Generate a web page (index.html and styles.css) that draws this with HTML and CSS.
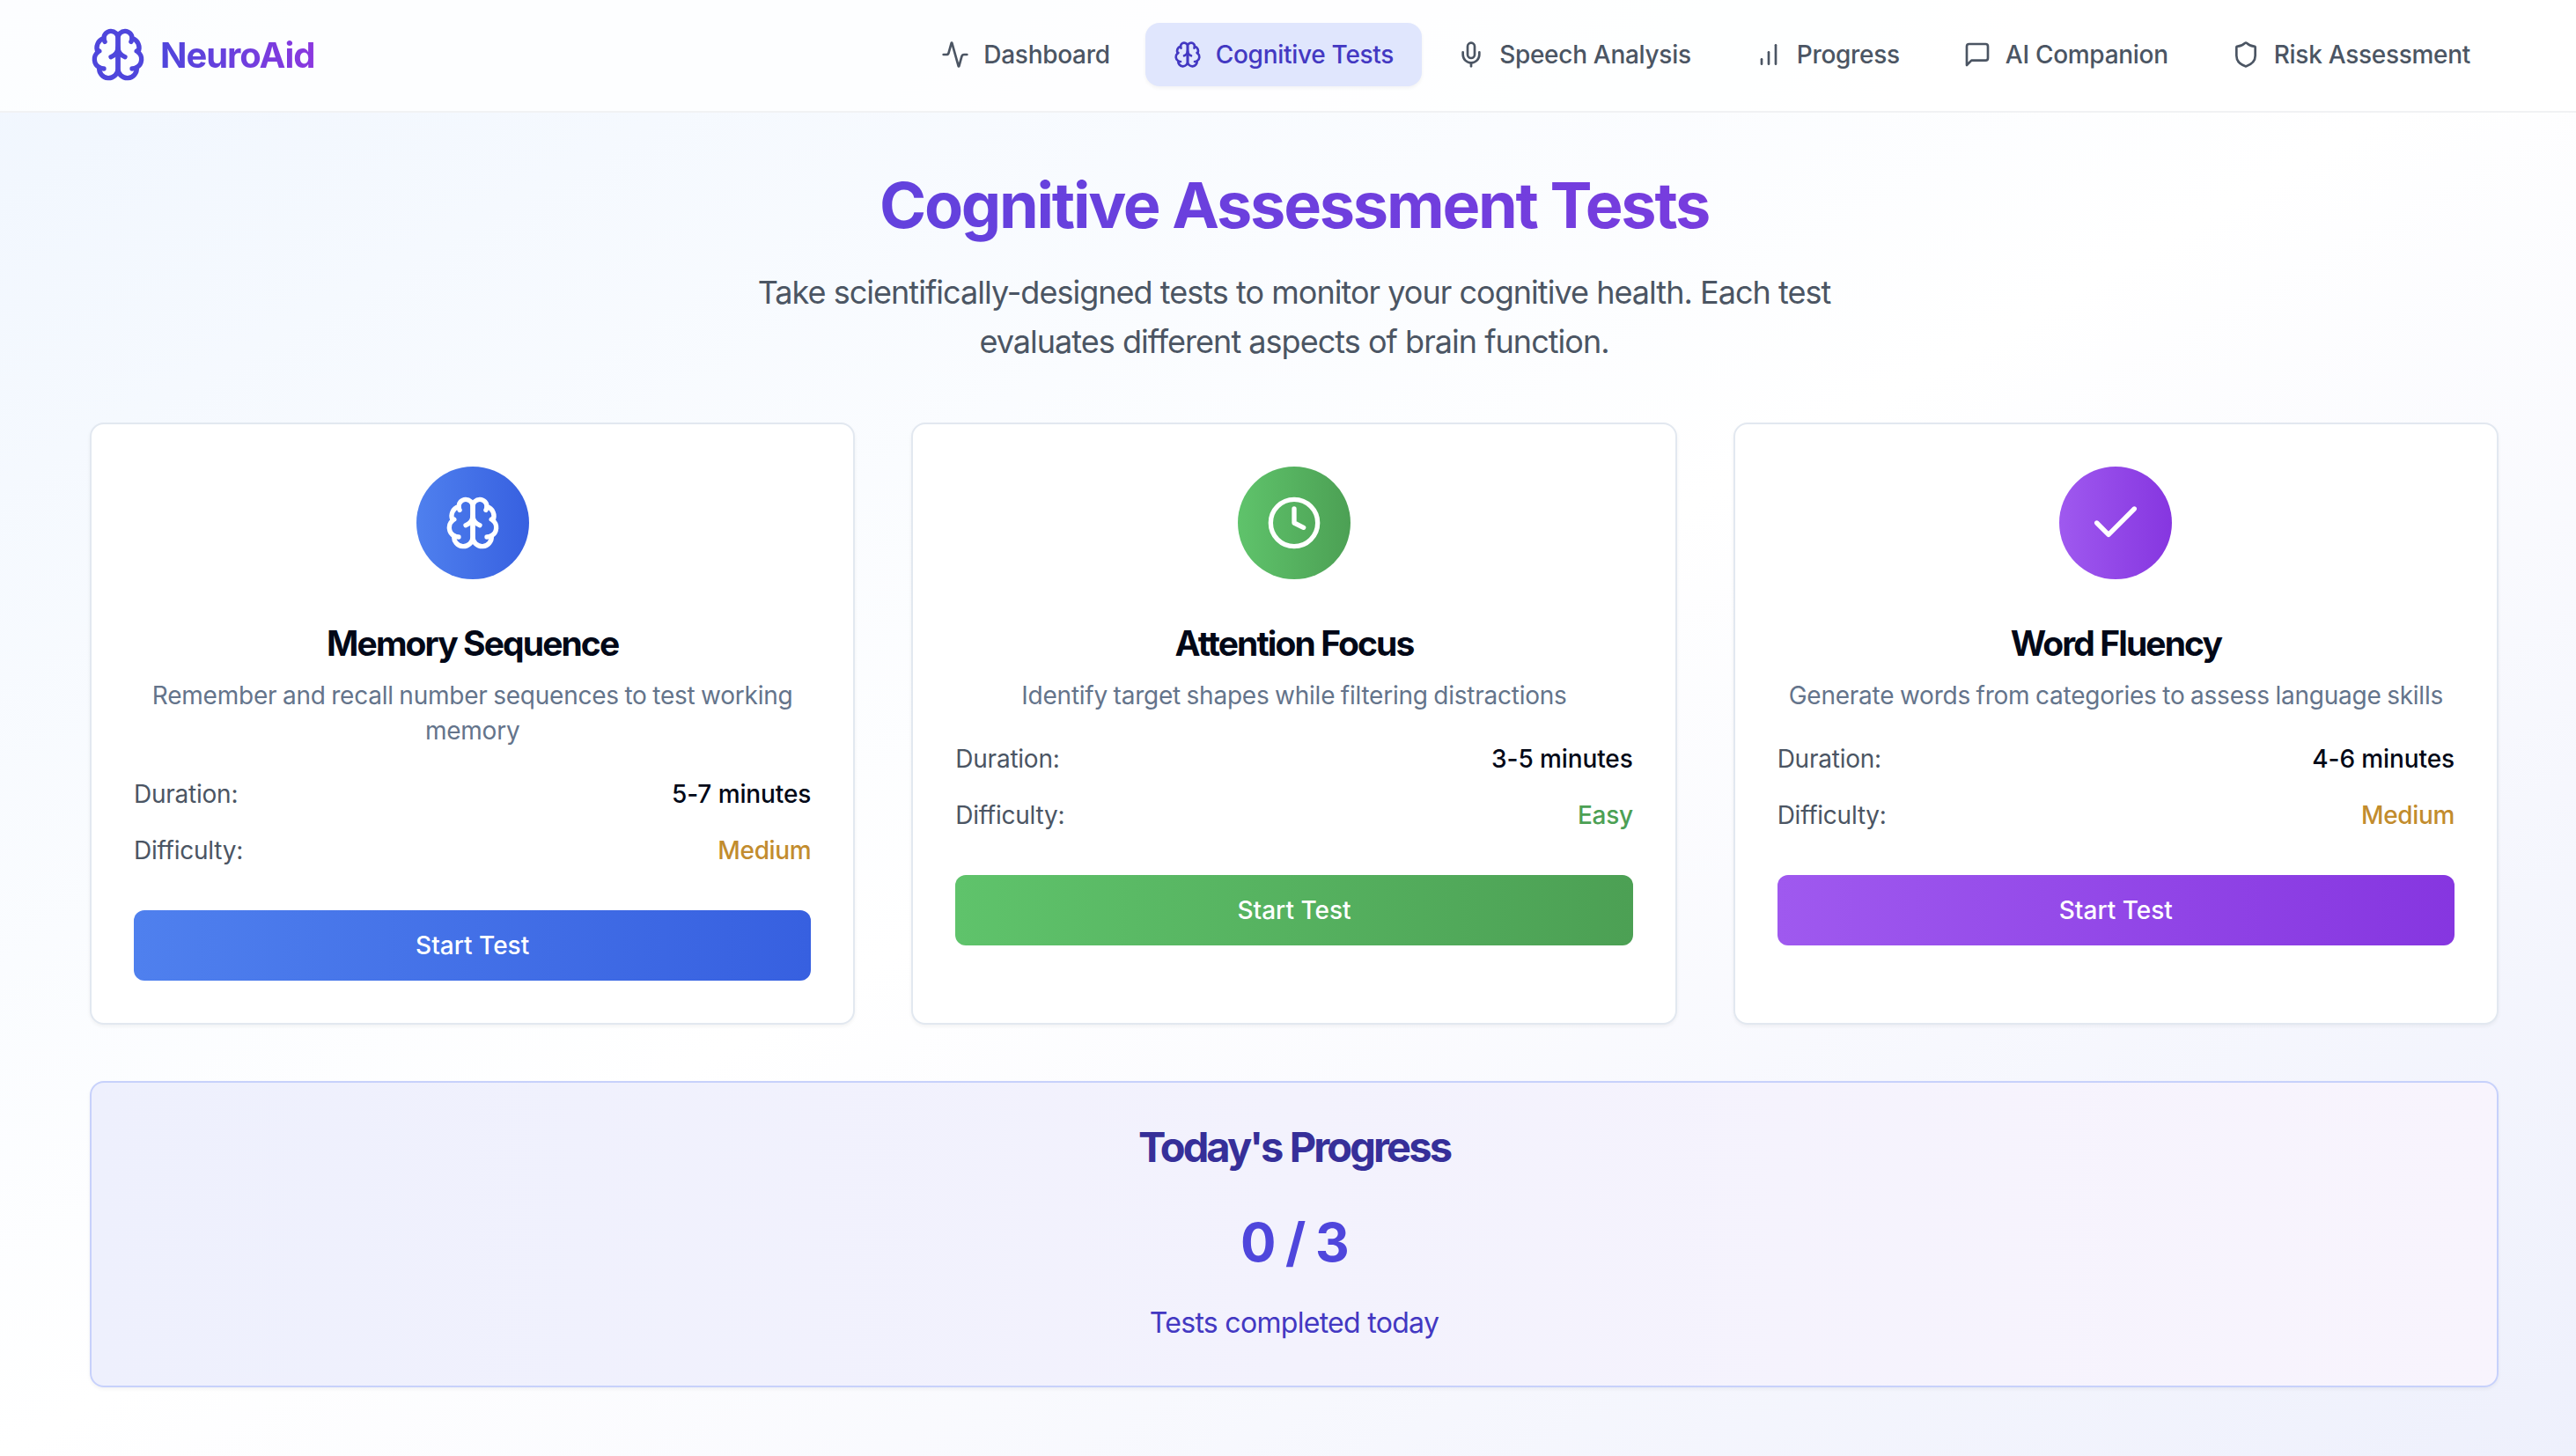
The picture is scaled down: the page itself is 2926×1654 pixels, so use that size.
FILE: index.html
```html
<!DOCTYPE html>
<html lang="en">

<head>
    <meta charset="UTF-8">
    <meta name="viewport" content="width=device-width, initial-scale=1.0">
    <title>NeuroAid</title>
    <link rel="stylesheet" href="styles.css">
</head>

<body>
    <!-- shared icons -->
    <svg class="icon-defs" xmlns="http://www.w3.org/2000/svg">
        <symbol id="icon-brain" viewBox="0 0 24 24">
            <path d="M12 5a3 3 0 1 0-5.997.125 4 4 0 0 0-2.526 5.77 4 4 0 0 0 .556 6.588A4 4 0 1 0 12 18Z" />
            <path d="M12 5a3 3 0 1 1 5.997.125 4 4 0 0 1 2.526 5.77 4 4 0 0 1-.556 6.588A4 4 0 1 1 12 18Z" />
            <path d="M15 13a4.5 4.5 0 0 1-3-4 4.5 4.5 0 0 1-3 4" />
            <path d="M17.599 6.5a3 3 0 0 0 .399-1.375" />
            <path d="M6.003 5.125A3 3 0 0 0 6.401 6.5" />
            <path d="M3.477 10.896a4 4 0 0 1 .585-.396" />
            <path d="M19.938 10.5a4 4 0 0 1 .585.396" />
            <path d="M6 18a4 4 0 0 1-1.967-.516" />
            <path d="M19.967 17.484A4 4 0 0 1 18 18" />
        </symbol>
    </svg>

    <div class="page">
        <header class="header">
            <div class="header-inner">
                <div class="logo">
                    <svg class="icon logo-icon"><use href="#icon-brain" /></svg>
                    <span class="logo-text">NeuroAid</span>
                </div>
                <nav class="nav">
                    <a class="nav-item">
                        <svg class="icon" viewBox="0 0 24 24"><path d="M22 12h-2.48a2 2 0 0 0-1.93 1.46l-2.35 8.36a.25.25 0 0 1-.48 0L9.24 2.18a.25.25 0 0 0-.48 0l-2.35 8.36A2 2 0 0 1 4.49 12H2" /></svg>
                        <span>Dashboard</span>
                    </a>
                    <a class="nav-item active">
                        <svg class="icon"><use href="#icon-brain" /></svg>
                        <span>Cognitive Tests</span>
                    </a>
                    <a class="nav-item">
                        <svg class="icon" viewBox="0 0 24 24"><path d="M12 2a3 3 0 0 0-3 3v7a3 3 0 0 0 6 0V5a3 3 0 0 0-3-3Z" /><path d="M19 10v2a7 7 0 0 1-14 0v-2" /><path d="M12 19v3" /></svg>
                        <span>Speech Analysis</span>
                    </a>
                    <a class="nav-item">
                        <svg class="icon" viewBox="0 0 24 24"><path d="M12 20V10" /><path d="M18 20V4" /><path d="M6 20v-4" /></svg>
                        <span>Progress</span>
                    </a>
                    <a class="nav-item">
                        <svg class="icon" viewBox="0 0 24 24"><path d="M21 15a2 2 0 0 1-2 2H7l-4 4V5a2 2 0 0 1 2-2h14a2 2 0 0 1 2 2z" /></svg>
                        <span>AI Companion</span>
                    </a>
                    <a class="nav-item">
                        <svg class="icon" viewBox="0 0 24 24"><path d="M20 13c0 5-3.5 7.5-7.66 8.95a1 1 0 0 1-.67-.01C7.5 20.5 4 18 4 13V6a1 1 0 0 1 1-1c2 0 4.5-1.2 6.24-2.72a1.17 1.17 0 0 1 1.52 0C14.51 3.81 17 5 19 5a1 1 0 0 1 1 1z" /></svg>
                        <span>Risk Assessment</span>
                    </a>
                </nav>
            </div>
        </header>

        <main class="main">
            <h1 class="title">Cognitive Assessment Tests</h1>
            <p class="sub-title">Take scientifically-designed tests to monitor your cognitive health. Each test<br>evaluates different aspects of brain function.</p>

            <div class="cards">
                <div class="card">
                    <div class="card-icon blue">
                        <svg class="icon"><use href="#icon-brain" /></svg>
                    </div>
                    <h3 class="card-title">Memory Sequence</h3>
                    <p class="card-text">Remember and recall number sequences to test working memory</p>
                    <div class="row"><span>Duration:</span><span class="value">5-7 minutes</span></div>
                    <div class="row"><span>Difficulty:</span><span class="value medium">Medium</span></div>
                    <button class="button blue">Start Test</button>
                </div>
                <div class="card">
                    <div class="card-icon green">
                        <svg class="icon" viewBox="0 0 24 24"><circle cx="12" cy="12" r="10" /><path d="M12 6v6l4 2" /></svg>
                    </div>
                    <h3 class="card-title">Attention Focus</h3>
                    <p class="card-text">Identify target shapes while filtering distractions</p>
                    <div class="row"><span>Duration:</span><span class="value">3-5 minutes</span></div>
                    <div class="row"><span>Difficulty:</span><span class="value easy">Easy</span></div>
                    <button class="button green">Start Test</button>
                </div>
                <div class="card">
                    <div class="card-icon purple">
                        <svg class="icon" viewBox="0 0 24 24"><path d="M20 6 9 17l-5-5" /></svg>
                    </div>
                    <h3 class="card-title">Word Fluency</h3>
                    <p class="card-text">Generate words from categories to assess language skills</p>
                    <div class="row"><span>Duration:</span><span class="value">4-6 minutes</span></div>
                    <div class="row"><span>Difficulty:</span><span class="value medium">Medium</span></div>
                    <button class="button purple">Start Test</button>
                </div>
            </div>

            <section class="progress">
                <h2 class="progress-title">Today's Progress</h2>
                <div class="progress-count">0 / 3</div>
                <p class="progress-text">Tests completed today</p>
            </section>
        </main>
    </div>
</body>

</html>
```
FILE: styles.css
```css
* {
    box-sizing: border-box;
}

html {
    overflow: hidden;
}

body {
    margin: 0;
    font-family: Inter, "Liberation Sans", sans-serif;
    font-size: 32px;
    line-height: 48px;
    color: #020817;
}

h1, h2, h3, p {
    margin: 0;
}

.icon-defs {
    display: none;
}

.icon {
    width: 32px;
    height: 32px;
    flex-shrink: 0;
    fill: none;
    stroke: currentColor;
    stroke-width: 2;
    stroke-linecap: round;
    stroke-linejoin: round;
}

.page {
    width: 2940px;
    height: 1654px;
    overflow: hidden;
    background: linear-gradient(to bottom right, #f0f6fe, #ffffff, #eef0fc);
}

.header {
    height: 128px;
    background: rgba(255, 255, 255, 0.8);
    border-bottom: 2px solid #f1f2f4;
}

.header-inner {
    width: 2736px;
    height: 124px;
    margin: 0 auto;
    display: flex;
    align-items: center;
    justify-content: space-between;
}

.logo {
    display: flex;
    align-items: center;
    gap: 16px;
    color: #4f46dc;
}

.logo-icon {
    width: 64px;
    height: 64px;
}

.logo-text {
    padding-top: 2px;
    font-size: 40px;
    line-height: 56px;
    font-weight: 700;
    letter-spacing: -1.05px;
    background: linear-gradient(to right, #4f46dc, #8b38df);
    background-clip: text;
    color: transparent;
}

.nav {
    display: flex;
    gap: 8px;
}

.nav-item {
    display: flex;
    align-items: center;
    gap: 16px;
    padding: 16px 32px;
    border-radius: 16px;
    font-size: 28px;
    line-height: 40px;
    font-weight: 500;
    letter-spacing: -0.29px;
    color: #4b5563;
}

.nav-item.active {
    background: #e0e6fd;
    color: #4338c2;
    box-shadow: 0 2px 4px rgba(0, 0, 0, 0.05);
}

.main {
    width: 2736px;
    margin: 0 auto;
    padding-top: 64px;
}

.title {
    margin-bottom: 22px;
    padding: 1px 0 9px;
    font-size: 72px;
    line-height: 80px;
    font-weight: 700;
    letter-spacing: -2.25px;
    text-align: center;
    background: linear-gradient(to right, #4f46dc, #8b38df);
    background-clip: text;
    color: transparent;
}

.sub-title {
    width: 1344px;
    margin: 0 auto 64px;
    font-size: 36px;
    line-height: 56px;
    letter-spacing: -0.97px;
    text-align: center;
    color: #4b5563;
}

.cards {
    display: grid;
    grid-template-columns: repeat(3, 1fr);
    gap: 64px;
    margin-bottom: 64px;
}

.card {
    padding: 48px;
    background: #fff;
    border: 2px solid #e2e8f0;
    border-radius: 16px;
    box-shadow: 0 2px 4px rgba(0, 0, 0, 0.05);
    font-size: 28px;
    line-height: 40px;
    letter-spacing: -0.24px;
}

.card-icon {
    width: 128px;
    height: 128px;
    margin: 0 auto 45px;
    display: flex;
    align-items: center;
    justify-content: center;
    border-radius: 50%;
    color: #fff;
}

.card-icon .icon {
    width: 64px;
    height: 64px;
}

.card-title {
    margin-bottom: 11px;
    font-size: 39px;
    line-height: 56px;
    font-weight: 650;
    letter-spacing: -1.9px;
    text-align: center;
}

.card-text {
    margin-bottom: 32px;
    word-spacing: -1px;
    text-align: center;
    color: #64748b;
}

.row {
    display: flex;
    justify-content: space-between;
    margin-bottom: 24px;
    color: #4b5563;
}

.value {
    font-weight: 500;
    letter-spacing: -0.1px;
    color: #020817;
}

.value.medium,
.value.easy {
    letter-spacing: -0.35px;
}

.value.medium {
    color: #c28c2e;
}

.value.easy {
    color: #4ca054;
}

.button {
    display: block;
    width: 100%;
    height: 80px;
    margin-top: 48px;
    padding: 0;
    border: none;
    border-radius: 12px;
    font: 500 28px/40px Inter, "Liberation Sans", sans-serif;
    color: #fff;
}

.blue {
    background: linear-gradient(to right, #4f80ee, #3760e0);
}

.green {
    background: linear-gradient(to right, #5fc36b, #4ca054);
}

.purple {
    background: linear-gradient(to right, #9f59ef, #8636e0);
}

.progress {
    padding: 48px;
    background: linear-gradient(to right, #eef0fd, #f8f4fd);
    border: 2px solid #c7d1fb;
    border-radius: 16px;
    box-shadow: 0 2px 4px rgba(0, 0, 0, 0.05);
    text-align: center;
}

.progress-title {
    padding-top: 1px;
    margin-bottom: 48px;
    font-size: 47px;
    line-height: 48px;
    font-weight: 650;
    letter-spacing: -2.9px;
    word-spacing: 1px;
    color: #362f99;
}

.progress-count {
    margin-bottom: 32px;
    font-size: 60px;
    line-height: 72px;
    font-weight: 700;
    letter-spacing: -1.8px;
    color: #4f46dc;
}

.progress-text {
    margin-bottom: -1px;
    letter-spacing: -0.7px;
    color: #4338c2;
}
```
